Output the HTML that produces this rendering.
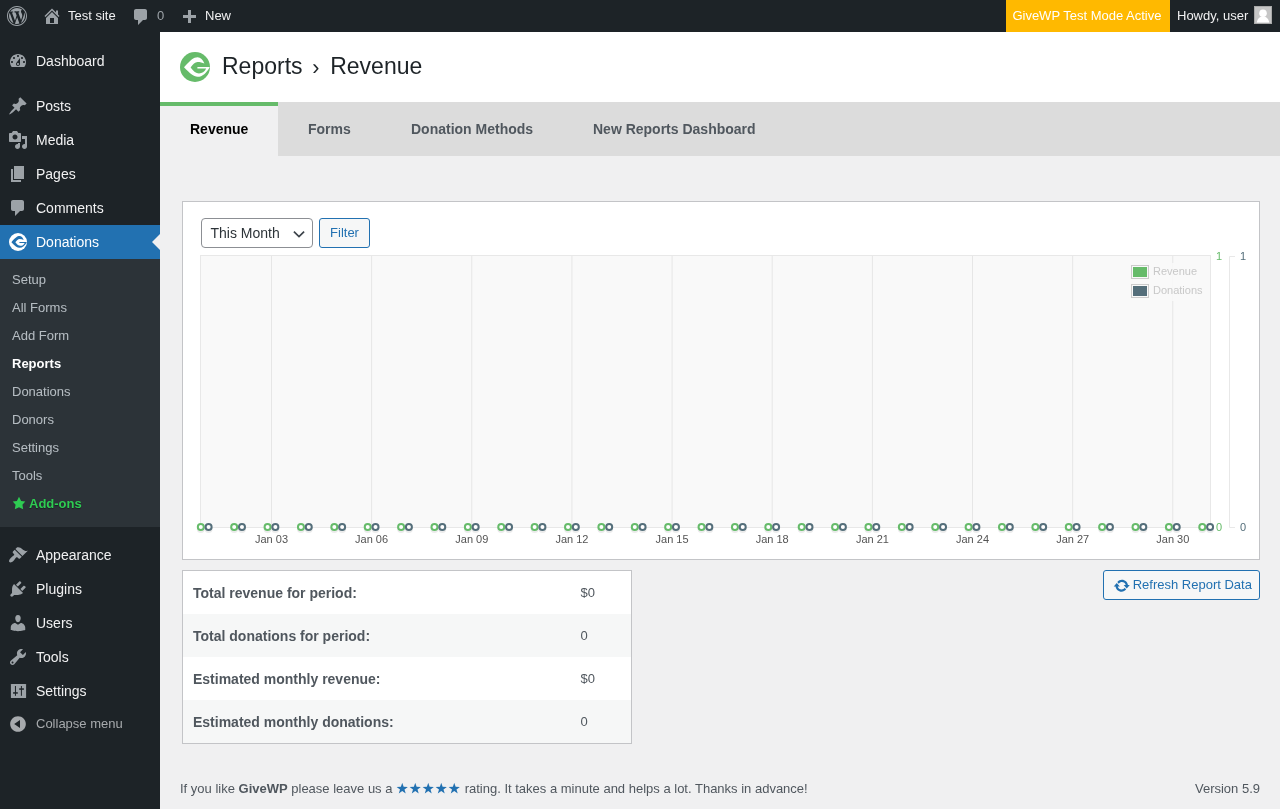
<!DOCTYPE html>
<html><head><meta charset="utf-8">
<style>
*{box-sizing:border-box;margin:0;padding:0}
html,body{width:1280px;height:809px;overflow:hidden}
body{background:#f0f0f1;font-family:"Liberation Sans",sans-serif;color:#3c434a;font-size:13px;line-height:1.4;position:relative}
.abs{position:absolute}
#adminbar{position:absolute;left:0;top:0;width:1280px;height:32px;background:#1d2327;color:#f0f0f1;font-size:13px;line-height:32px}
#adminbar .t{position:absolute;top:0;white-space:nowrap}
#menu{position:absolute;left:0;top:32px;width:160px;height:777px;background:#1d2327}
.mi{position:absolute;left:0;width:160px;height:34px;color:#f0f0f1;font-size:14px;line-height:34px}
.mi span{position:absolute;left:36px;top:0}
.mi svg{position:absolute;left:8px;top:7px;width:20px;height:20px}
#sub{position:absolute;left:0;top:227px;width:160px;height:268px;background:#2c3338}
.si{position:absolute;left:12px;color:rgba(240,246,252,.7);font-size:13px;line-height:18px;white-space:nowrap}
#givehead{position:absolute;left:160px;top:32px;width:1120px;height:70px;background:#fff}
#tabs{position:absolute;left:160px;top:102px;width:1120px;height:54px;background:#dcdcdc}
.tab{position:absolute;top:0;height:54px;line-height:54px;font-size:14px;font-weight:bold;color:#50575e;white-space:nowrap}
#chartbox{position:absolute;left:182px;top:201px;width:1078px;height:359px;background:#fff;border:1px solid #c3c4c7}
.sel{border:1px solid #8c8f94;border-radius:4px;background:#fff;color:#2c3338;font-size:14px;line-height:28px;padding-left:8.5px;white-space:nowrap}
.btn{border:1px solid #2271b1;border-radius:3px;background:#f6f7f7;color:#2271b1;font-size:13px;line-height:28px;text-align:center;white-space:nowrap}
.dg{stroke:#66bb6a;fill:#fff}.dd{stroke:#546e7a;fill:#fff}.sh{stroke:rgba(0,0,0,.08)}
.xl{position:absolute;top:332px;width:50px;text-align:center;font-size:11px;line-height:13px;color:#545454;white-space:nowrap}
.yl{position:absolute;font-size:11px;line-height:13px;white-space:nowrap}
.leg{position:absolute;font-size:11px;line-height:14px;color:#c8c8c8;white-space:nowrap}
#stats{position:absolute;left:182px;top:570px;width:450px;height:174px;border:1px solid #c3c4c7;background:#fff}
.row{position:absolute;left:0;width:448px;height:43px;font-size:14px;line-height:43px;color:#50575e}
.row b{position:absolute;left:10px;top:1px;white-space:nowrap}
.row span{position:absolute;left:397.5px;top:-0.5px;font-size:13px}
.foot{font-size:13px;line-height:20px;color:#50575e;white-space:nowrap}
.h1{top:16px;font-size:23px;line-height:36px;color:#1d2327;white-space:nowrap}
</style></head><body><div id="root" style="position:absolute;left:0;top:0;width:1280px;height:809px;will-change:transform">

<div id="adminbar">
  <svg class="abs" style="left:7px;top:6px" width="20" height="20" viewBox="0 0 20 20"><path fill="#9ca2a7" d="M20 10c0-5.52-4.48-10-10-10S0 4.48 0 10s4.48 10 10 10 10-4.48 10-10zM10 1.01c4.97 0 8.99 4.02 8.99 8.99s-4.02 8.99-8.99 8.99S1.01 14.97 1.01 10 5.03 1.01 10 1.01zM8.01 14.82L4.96 6.61c.49-.03 1.05-.08 1.05-.08.43-.05.38-1.01-.06-.99 0 0-1.29.1-2.13.1-.15 0-.33 0-.52-.01 1.44-2.17 3.9-3.6 6.7-3.6 2.09 0 3.99.79 5.41 2.09-.6-.08-1.45.35-1.45 1.42 0 .66.38 1.22.79 1.88.31.54.5 1.22.5 2.21 0 1.34-1.27 4.48-1.27 4.48l-2.71-7.5c.48-.03.75-.16.75-.16.43-.05.38-1.1-.05-1.08 0 0-1.3.11-2.14.11-.78 0-2.11-.11-2.11-.11-.43-.02-.48 1.06-.05 1.08l.84.08 1.12 3.04zm6.02 2.15L16.64 10s.67-1.69.39-3.81c.63 1.14.94 2.42.94 3.81 0 2.96-1.56 5.58-3.94 6.97zM2.68 6.77L6.5 17.25c-2.67-1.3-4.47-4.08-4.47-7.25 0-1.16.2-2.23.65-3.23zm7.45 4.53l2.29 6.25c-.75.27-1.57.42-2.42.42-.72 0-1.41-.11-2.06-.3z"/></svg>
  <svg class="abs" style="left:42px;top:6px" width="20" height="20" viewBox="0 0 20 20"><path fill="#9ca2a7" d="M16 8.5l1.53 1.53-1.06 1.06L10 4.62l-6.47 6.47-1.06-1.06L10 2.5l4 4v-2h2v4zm-6-2.46l6 5.99V18H4v-5.97zM12 17v-5H8v5h4z"/></svg>
  <div class="t" style="left:68px">Test site</div>
  <svg class="abs" style="left:131px;top:7px" width="20" height="20" viewBox="0 0 20 20"><path fill="#9ca2a7" d="M5 2h9c1.1 0 2 .9 2 2v7c0 1.1-.9 2-2 2h-2l-5 5v-5H5c-1.1 0-2-.9-2-2V4c0-1.1.9-2 2-2z"/></svg>
  <div class="t" style="left:157px;color:#9ca2a7">0</div>
  <svg class="abs" style="left:179px;top:8px" width="20" height="20" viewBox="0 0 20 20"><path fill="#9ca2a7" d="M17 7v3h-5v5H9v-5H4V7h5V2h3v5h5z"/></svg>
  <div class="t" style="left:205px">New</div>
  <div class="abs" style="left:1006px;top:0;width:164px;height:32px;background:#ffb900"></div>
  <div class="t" style="left:1012.4px;color:#fff">GiveWP Test Mode Active</div>
  <div class="t" style="left:1177px">Howdy, user</div>
  <div class="abs" style="left:1254px;top:6px;width:18px;height:18px;background:#c6c6c6;border:1px solid #a9a9a9;overflow:hidden"><svg width="16" height="16" viewBox="0 0 16 16" style="display:block"><circle cx="8" cy="6.3" r="3.8" fill="#fff"/><path d="M1.8 15.6C2.5 11.5 5 9.6 8 9.6S13.5 11.5 14.2 15.6z" fill="#fff"/></svg></div>
</div>

<div id="menu">
<div class="mi" style="top:12px"><svg viewBox="0 0 20 20"><path fill="#9ca2a7" fill-rule="evenodd" d="M3.76 16h12.48c1.1-1.37 1.76-3.11 1.76-5 0-4.42-3.58-8-8-8s-8 3.58-8 8c0 1.89.66 3.630 1.76 5zM10 4c.55 0 1 .45 1 1s-.45 1-1 1-1-.45-1-1 .45-1 1-1zM6 6c.55 0 1 .45 1 1s-.45 1-1 1-1-.45-1-1 .45-1 1-1zm8 0c.55 0 1 .45 1 1s-.45 1-1 1-1-.45-1-1 .45-1 1-1zm-5.37 5.55L12 7v6c0 1.1-.9 2-2 2s-2-.9-2-2c0-.57.24-1.08.63-1.450zM4 10c.55 0 1 .45 1 1s-.45 1-1 1-1-.45-1-1 .45-1 1-1zm12 0c.55 0 1 .45 1 1s-.45 1-1 1-1-.45-1-1 .45-1 1-1zm-5 3c0-.55-.45-1-1-1s-1 .45-1 1 .45 1 1 1 1-.45 1-1z"/></svg><span>Dashboard</span></div>
<div class="mi" style="top:57px"><svg viewBox="0 0 20 20"><path fill="#9ca2a7" fill-rule="evenodd" d="M10.44 3.02l1.82-1.82 6.36 6.35-1.83 1.82c-1.05-.68-2.48-.57-3.41.36l-.75.75c-.92.93-1.04 2.35-.35 3.41l-1.830 1.82-2.410-2.41-2.8 2.79c-.42.42-3.38 2.71-3.8 2.29s1.86-3.39 2.28-3.810l2.79-2.79L4.1 9.36l1.83-1.82c1.05.69 2.48.57 3.4-.36l.75-.75c.93-.92 1.05-2.35.36-3.41z"/></svg><span>Posts</span></div>
<div class="mi" style="top:91px"><svg viewBox="0 0 20 20"><path fill="#9ca2a7" fill-rule="evenodd" d="M13 11V4c0-.55-.45-1-1-1h-1.67L9 1H5L3.67 3H2c-.55 0-1 .45-1 1v7c0 .55.45 1 1 1h10c.55 0 1-.45 1-1zM7 4.5c1.38 0 2.5 1.12 2.5 2.5S8.38 9.5 7 9.5 4.5 8.38 4.5 7 5.62 4.5 7 4.5zM14 6h5v10.5c0 1.38-1.12 2.5-2.5 2.5S14 17.88 14 16.5s1.12-2.5 2.5-2.5c.17 0 .34.02.5.05V9h-3V6zm-4 8.05V13h2v3.5c0 1.38-1.12 2.5-2.5 2.5S7 17.880 7 16.5 8.12 14 9.5 14c.17 0 .34.02.5.05z"/></svg><span>Media</span></div>
<div class="mi" style="top:125px"><svg viewBox="0 0 20 20"><path fill="#9ca2a7" fill-rule="evenodd" d="M6 15V2h10v13H6zm-1 1h8v2H3V5h2v11z"/></svg><span>Pages</span></div>
<div class="mi" style="top:159px"><svg viewBox="0 0 20 20"><path fill="#9ca2a7" fill-rule="evenodd" d="M5 2h9c1.1 0 2 .9 2 2v7c0 1.1-.9 2-2 2h-2l-5 5v-5H5c-1.1 0-2-.9-2-2V4c0-1.1.9-2 2-2z"/></svg><span>Comments</span></div>
<div class="mi" style="top:193px;background:#2271b1;color:#fff"><svg viewBox="0 0 30 30" style="left:9px;top:8px;width:18px;height:18px"><circle cx="15" cy="15" r="15" fill="#fff"/><path fill="#2271b1" d="M24.4 11.6C23 7.5 20.5 5.2 17.6 5.2C13.5 5.2 10.5 8 4 15.3C10 21.5 13.5 24.7 17.6 24.7C22.5 24.7 26.5 21 29.8 14.9L17.4 15.1L17.4 16.5L26.2 16.5C24.5 19.8 22 21.4 19 21.4C16 21.4 13.5 19.5 10.6 15.5C13 12.5 15 10.1 17.5 10.1C20 10.1 22.5 10.8 24.4 11.6Z"/></svg><span>Donations</span><div class="abs" style="left:152px;top:9px;width:0;height:0;border-top:8px solid transparent;border-bottom:8px solid transparent;border-right:8px solid #f0f0f1"></div></div>
<div class="mi" style="top:506px"><svg viewBox="0 0 20 20"><path fill="#9ca2a7" fill-rule="evenodd" d="M14.48 11.06L7.41 3.99l1.5-1.5c.5-.56 2.3-.47 3.51.32 1.21.8 1.43 1.28 2.91 2.1 1.18.64 2.45 1.26 4.45.85zm-.71.71L6.7 4.7 4.93 6.47c-.39.39-.39 1.02 0 1.41l1.06 1.06c.39.39.39 1.030 0 1.42-.6.6-1.43 1.11-2.21 1.69-.35.26-.7.53-1.01.84C1.43 14.23.4 16.08 1.4 17.07c.99 1 2.84-.03 4.18-1.36.31-.31.58-.66.85-1.02.57-.78 1.08-1.61 1.69-2.21.39-.39 1.02-.39 1.41 0l1.06 1.06c.39.39 1.02.39 1.41 0z"/></svg><span>Appearance</span></div>
<div class="mi" style="top:540px"><svg viewBox="0 0 20 20"><path fill="#9ca2a7" fill-rule="evenodd" d="M13.11 4.36L9.87 7.6 8 5.73l3.24-3.24c.35-.34 1.05-.2 1.56.32.52.51.66 1.21.31 1.55zm-8 1.77l.91-1.12 9.01 9.01-1.19.84c-.71.71-2.63 1.16-3.820 1.16H6.14L4.9 17.26c-.59.59-1.54.59-2.12 0-.59-.58-.59-1.53 0-2.12l1.24-1.24v-3.88c0-1.13.4-3.19 1.09-3.890zm7.26 3.97l3.24-3.24c.34-.35 1.04-.21 1.55.31.52.51.66 1.21.31 1.55l-3.24 3.25z"/></svg><span>Plugins</span></div>
<div class="mi" style="top:574px"><svg viewBox="0 0 20 20"><path fill="#9ca2a7" fill-rule="evenodd" d="M10 9.25c-2.27 0-2.73-3.44-2.73-3.44C7 4.02 7.82 2 9.97 2c2.16 0 2.98 2.02 2.71 3.81 0 0-.41 3.44-2.68 3.44zm0 2.57L12.72 10c2.39 0 4.52 2.33 4.52 4.53v2.49s-3.65 1.13-7.24 1.13c-3.65 0-7.24-1.13-7.24-1.13v-2.49c0-2.25 1.94-4.48 4.47-4.480z"/></svg><span>Users</span></div>
<div class="mi" style="top:608px"><svg viewBox="0 0 20 20"><path fill="#9ca2a7" fill-rule="evenodd" d="M16.68 9.77c-1.34 1.34-3.3 1.67-4.95.99l-5.41 6.52c-.99.99-2.59.99-3.58 0s-.99-2.59 0-3.57l6.52-5.42c-.68-1.650-.35-3.610.99-4.950 1.28-1.28 3.12-1.62 4.72-1.06l-2.89 2.89 2.82 2.82 2.86-2.87c.53 1.580.18 3.39-1.08 4.650zM3.81 16.21c.4.39 1.04.39 1.43 0 .4-.4.4-1.04 0-1.43-.39-.4-1.03-.4-1.43 0-.39.39-.39 1.03 0 1.43z"/></svg><span>Tools</span></div>
<div class="mi" style="top:642px"><svg viewBox="0 0 20 20"><rect x="2.9" y="2.9" width="15.2" height="14.2" rx="0.6" fill="#9ca2a7"/><g fill="#1d2327"><rect x="6.95" y="5" width="1" height="9.8"/><rect x="5.1" y="11.2" width="4.7" height="1.5"/><rect x="12.9" y="5" width="1" height="9.8"/><rect x="11.2" y="7.3" width="4.7" height="1.5"/></g></svg><span>Settings</span></div>
<div class="mi" style="top:675px;font-size:13px;color:#a7aaad"><svg viewBox="0 0 20 20" style="top:7px"><path fill="#a7aaad" d="M10 2.16c4.33 0 7.84 3.51 7.84 7.84s-3.51 7.84-7.84 7.84S2.16 14.33 2.16 10 5.71 2.16 10 2.16zm2 11.72V6.12L6.18 9.97z"/></svg><span>Collapse menu</span></div>
<div id="sub">
<div class="si" style="top:12px;">Setup</div>
<div class="si" style="top:40px;">All Forms</div>
<div class="si" style="top:68px;">Add Form</div>
<div class="si" style="top:96px;color:#fff;font-weight:600;font-weight:bold">Reports</div>
<div class="si" style="top:124px;">Donations</div>
<div class="si" style="top:152px;">Donors</div>
<div class="si" style="top:180px;">Settings</div>
<div class="si" style="top:208px;">Tools</div>
<div class="si" style="top:236px;color:#2ecc52;font-weight:bold;text-shadow:0 1px 1px rgba(0,0,0,.4)"><svg width="14" height="14" viewBox="0 0 20 20" style="vertical-align:-2px;margin-right:3px"><path fill="#2ecc52" d="M10 1l3 6 6 .75-4.12 4.62L16 19l-6-3-6 3 1.13-6.63L1 7.75 7 7z"/></svg>Add-ons</div>
</div>
</div>

<div id="givehead">
  <svg class="abs" style="left:20px;top:20px" width="30" height="30" viewBox="0 0 30 30"><circle cx="15" cy="15" r="15" fill="#66bb6a"/><path fill="#fff" d="M24.4 11.6C23 7.5 20.5 5.2 17.6 5.2C13.5 5.2 10.5 8 4 15.3C10 21.5 13.5 24.7 17.6 24.7C22.5 24.7 26.5 21 29.8 14.9L17.4 15.1L17.4 16.5L26.2 16.5C24.5 19.8 22 21.4 19 21.4C16 21.4 13.5 19.5 10.6 15.5C13 12.5 15 10.1 17.5 10.1C20 10.1 22.5 10.8 24.4 11.6Z"/></svg>
  <div class="abs h1" style="left:62px">Reports</div><div class="abs h1" style="left:152.3px;top:17.6px;font-size:21.5px">&rsaquo;</div><div class="abs h1" style="left:170.2px">Revenue</div>
</div>
<div id="tabs">
  <div class="abs" style="left:0;top:0;width:118px;height:54px;background:#f0f0f1;border-top:4px solid #66bb6a"></div>
  <div class="tab" style="left:30px;color:#000;top:0">Revenue</div>
  <div class="tab" style="left:148px">Forms</div>
  <div class="tab" style="left:251px">Donation Methods</div>
  <div class="tab" style="left:433px">New Reports Dashboard</div>
</div>
<div id="chartbox"><div class="abs" style="left:-1px;top:-1px;width:1078px;height:358px">
  <div class="abs sel" style="left:19px;top:17px;width:112px;height:30px">This Month<svg class="abs" style="right:7px;top:9px" width="12" height="12" viewBox="0 0 12 12"><path d="M0.9 3.6L6 8.5l5.1-4.9" fill="none" stroke="#3c434a" stroke-width="1.7"/></svg></div>
  <div class="abs btn" style="left:137px;top:17px;width:51px;height:30px">Filter</div>
  <svg class="abs" style="left:0;top:0" width="1076" height="356">
    <rect x="18" y="54" width="1011" height="272" fill="#f9f9f9"/>
    <line x1="89.5" y1="54" x2="89.5" y2="326" stroke="#e6e6e6" stroke-width="1"/><line x1="189.6" y1="54" x2="189.6" y2="326" stroke="#e6e6e6" stroke-width="1"/><line x1="289.8" y1="54" x2="289.8" y2="326" stroke="#e6e6e6" stroke-width="1"/><line x1="389.9" y1="54" x2="389.9" y2="326" stroke="#e6e6e6" stroke-width="1"/><line x1="490.1" y1="54" x2="490.1" y2="326" stroke="#e6e6e6" stroke-width="1"/><line x1="590.2" y1="54" x2="590.2" y2="326" stroke="#e6e6e6" stroke-width="1"/><line x1="690.4" y1="54" x2="690.4" y2="326" stroke="#e6e6e6" stroke-width="1"/><line x1="790.5" y1="54" x2="790.5" y2="326" stroke="#e6e6e6" stroke-width="1"/><line x1="890.7" y1="54" x2="890.7" y2="326" stroke="#e6e6e6" stroke-width="1"/><line x1="990.8" y1="54" x2="990.8" y2="326" stroke="#e6e6e6" stroke-width="1"/>
    <rect x="18.5" y="54.5" width="1010" height="272" fill="none" stroke="#e8e8e8" stroke-width="1"/>
    <path d="M1053 55.5h-5.5v271h5.5" fill="none" stroke="#e8e8e8" stroke-width="1"/>
    <g fill="none" stroke-width="2"><circle cx="18.80" cy="328.0" r="3" class="sh"/><circle cx="26.60" cy="328.0" r="3" class="sh"/><circle cx="52.18" cy="328.0" r="3" class="sh"/><circle cx="59.98" cy="328.0" r="3" class="sh"/><circle cx="85.57" cy="328.0" r="3" class="sh"/><circle cx="93.37" cy="328.0" r="3" class="sh"/><circle cx="118.95" cy="328.0" r="3" class="sh"/><circle cx="126.75" cy="328.0" r="3" class="sh"/><circle cx="152.33" cy="328.0" r="3" class="sh"/><circle cx="160.13" cy="328.0" r="3" class="sh"/><circle cx="185.72" cy="328.0" r="3" class="sh"/><circle cx="193.52" cy="328.0" r="3" class="sh"/><circle cx="219.10" cy="328.0" r="3" class="sh"/><circle cx="226.90" cy="328.0" r="3" class="sh"/><circle cx="252.48" cy="328.0" r="3" class="sh"/><circle cx="260.28" cy="328.0" r="3" class="sh"/><circle cx="285.86" cy="328.0" r="3" class="sh"/><circle cx="293.66" cy="328.0" r="3" class="sh"/><circle cx="319.25" cy="328.0" r="3" class="sh"/><circle cx="327.05" cy="328.0" r="3" class="sh"/><circle cx="352.63" cy="328.0" r="3" class="sh"/><circle cx="360.43" cy="328.0" r="3" class="sh"/><circle cx="386.01" cy="328.0" r="3" class="sh"/><circle cx="393.81" cy="328.0" r="3" class="sh"/><circle cx="419.40" cy="328.0" r="3" class="sh"/><circle cx="427.20" cy="328.0" r="3" class="sh"/><circle cx="452.78" cy="328.0" r="3" class="sh"/><circle cx="460.58" cy="328.0" r="3" class="sh"/><circle cx="486.16" cy="328.0" r="3" class="sh"/><circle cx="493.96" cy="328.0" r="3" class="sh"/><circle cx="519.55" cy="328.0" r="3" class="sh"/><circle cx="527.35" cy="328.0" r="3" class="sh"/><circle cx="552.93" cy="328.0" r="3" class="sh"/><circle cx="560.73" cy="328.0" r="3" class="sh"/><circle cx="586.31" cy="328.0" r="3" class="sh"/><circle cx="594.11" cy="328.0" r="3" class="sh"/><circle cx="619.69" cy="328.0" r="3" class="sh"/><circle cx="627.49" cy="328.0" r="3" class="sh"/><circle cx="653.08" cy="328.0" r="3" class="sh"/><circle cx="660.88" cy="328.0" r="3" class="sh"/><circle cx="686.46" cy="328.0" r="3" class="sh"/><circle cx="694.26" cy="328.0" r="3" class="sh"/><circle cx="719.84" cy="328.0" r="3" class="sh"/><circle cx="727.64" cy="328.0" r="3" class="sh"/><circle cx="753.23" cy="328.0" r="3" class="sh"/><circle cx="761.03" cy="328.0" r="3" class="sh"/><circle cx="786.61" cy="328.0" r="3" class="sh"/><circle cx="794.41" cy="328.0" r="3" class="sh"/><circle cx="819.99" cy="328.0" r="3" class="sh"/><circle cx="827.79" cy="328.0" r="3" class="sh"/><circle cx="853.38" cy="328.0" r="3" class="sh"/><circle cx="861.17" cy="328.0" r="3" class="sh"/><circle cx="886.76" cy="328.0" r="3" class="sh"/><circle cx="894.56" cy="328.0" r="3" class="sh"/><circle cx="920.14" cy="328.0" r="3" class="sh"/><circle cx="927.94" cy="328.0" r="3" class="sh"/><circle cx="953.52" cy="328.0" r="3" class="sh"/><circle cx="961.32" cy="328.0" r="3" class="sh"/><circle cx="986.91" cy="328.0" r="3" class="sh"/><circle cx="994.71" cy="328.0" r="3" class="sh"/><circle cx="1020.29" cy="328.0" r="3" class="sh"/><circle cx="1028.09" cy="328.0" r="3" class="sh"/></g>
    <g fill="none" stroke-width="2"><circle cx="18.80" cy="326.0" r="3" class="dg"/><circle cx="26.60" cy="326.0" r="3" class="dd"/><circle cx="52.18" cy="326.0" r="3" class="dg"/><circle cx="59.98" cy="326.0" r="3" class="dd"/><circle cx="85.57" cy="326.0" r="3" class="dg"/><circle cx="93.37" cy="326.0" r="3" class="dd"/><circle cx="118.95" cy="326.0" r="3" class="dg"/><circle cx="126.75" cy="326.0" r="3" class="dd"/><circle cx="152.33" cy="326.0" r="3" class="dg"/><circle cx="160.13" cy="326.0" r="3" class="dd"/><circle cx="185.72" cy="326.0" r="3" class="dg"/><circle cx="193.52" cy="326.0" r="3" class="dd"/><circle cx="219.10" cy="326.0" r="3" class="dg"/><circle cx="226.90" cy="326.0" r="3" class="dd"/><circle cx="252.48" cy="326.0" r="3" class="dg"/><circle cx="260.28" cy="326.0" r="3" class="dd"/><circle cx="285.86" cy="326.0" r="3" class="dg"/><circle cx="293.66" cy="326.0" r="3" class="dd"/><circle cx="319.25" cy="326.0" r="3" class="dg"/><circle cx="327.05" cy="326.0" r="3" class="dd"/><circle cx="352.63" cy="326.0" r="3" class="dg"/><circle cx="360.43" cy="326.0" r="3" class="dd"/><circle cx="386.01" cy="326.0" r="3" class="dg"/><circle cx="393.81" cy="326.0" r="3" class="dd"/><circle cx="419.40" cy="326.0" r="3" class="dg"/><circle cx="427.20" cy="326.0" r="3" class="dd"/><circle cx="452.78" cy="326.0" r="3" class="dg"/><circle cx="460.58" cy="326.0" r="3" class="dd"/><circle cx="486.16" cy="326.0" r="3" class="dg"/><circle cx="493.96" cy="326.0" r="3" class="dd"/><circle cx="519.55" cy="326.0" r="3" class="dg"/><circle cx="527.35" cy="326.0" r="3" class="dd"/><circle cx="552.93" cy="326.0" r="3" class="dg"/><circle cx="560.73" cy="326.0" r="3" class="dd"/><circle cx="586.31" cy="326.0" r="3" class="dg"/><circle cx="594.11" cy="326.0" r="3" class="dd"/><circle cx="619.69" cy="326.0" r="3" class="dg"/><circle cx="627.49" cy="326.0" r="3" class="dd"/><circle cx="653.08" cy="326.0" r="3" class="dg"/><circle cx="660.88" cy="326.0" r="3" class="dd"/><circle cx="686.46" cy="326.0" r="3" class="dg"/><circle cx="694.26" cy="326.0" r="3" class="dd"/><circle cx="719.84" cy="326.0" r="3" class="dg"/><circle cx="727.64" cy="326.0" r="3" class="dd"/><circle cx="753.23" cy="326.0" r="3" class="dg"/><circle cx="761.03" cy="326.0" r="3" class="dd"/><circle cx="786.61" cy="326.0" r="3" class="dg"/><circle cx="794.41" cy="326.0" r="3" class="dd"/><circle cx="819.99" cy="326.0" r="3" class="dg"/><circle cx="827.79" cy="326.0" r="3" class="dd"/><circle cx="853.38" cy="326.0" r="3" class="dg"/><circle cx="861.17" cy="326.0" r="3" class="dd"/><circle cx="886.76" cy="326.0" r="3" class="dg"/><circle cx="894.56" cy="326.0" r="3" class="dd"/><circle cx="920.14" cy="326.0" r="3" class="dg"/><circle cx="927.94" cy="326.0" r="3" class="dd"/><circle cx="953.52" cy="326.0" r="3" class="dg"/><circle cx="961.32" cy="326.0" r="3" class="dd"/><circle cx="986.91" cy="326.0" r="3" class="dg"/><circle cx="994.71" cy="326.0" r="3" class="dd"/><circle cx="1020.29" cy="326.0" r="3" class="dg"/><circle cx="1028.09" cy="326.0" r="3" class="dd"/></g>
  </svg>
  <div class="xl" style="left:64.5px">Jan 03</div><div class="xl" style="left:164.6px">Jan 06</div><div class="xl" style="left:264.8px">Jan 09</div><div class="xl" style="left:364.9px">Jan 12</div><div class="xl" style="left:465.1px">Jan 15</div><div class="xl" style="left:565.2px">Jan 18</div><div class="xl" style="left:665.4px">Jan 21</div><div class="xl" style="left:765.5px">Jan 24</div><div class="xl" style="left:865.7px">Jan 27</div><div class="xl" style="left:965.8px">Jan 30</div>
  <div class="yl" style="left:1034px;top:49px;color:#66bb6a">1</div>
  <div class="yl" style="left:1034px;top:320px;color:#66bb6a">0</div>
  <div class="yl" style="left:1058px;top:49px;color:#546e7a">1</div>
  <div class="yl" style="left:1058px;top:320px;color:#546e7a">0</div>
  <div class="abs" style="left:947px;top:62px;width:78px;height:38px;background:rgba(249,249,249,.85)"></div><div class="abs" style="left:949px;top:64px;width:18px;height:14px;border:1px solid #ccc;padding:1px"><div style="width:14px;height:10px;background:#66bb6a"></div></div>
  <div class="abs" style="left:949px;top:83px;width:18px;height:14px;border:1px solid #ccc;padding:1px"><div style="width:14px;height:10px;background:#546e7a"></div></div>
  <div class="leg" style="left:971px;top:63px">Revenue</div>
  <div class="leg" style="left:971px;top:82px">Donations</div>
</div></div>
<div id="stats">
  <div class="row" style="top:0;background:#fff"><b>Total revenue for period:</b><span>$0</span></div>
  <div class="row" style="top:43px;background:#f6f7f7"><b>Total donations for period:</b><span>0</span></div>
  <div class="row" style="top:86px;background:#fff"><b>Estimated monthly revenue:</b><span>$0</span></div>
  <div class="row" style="top:129px;background:#f6f7f7"><b>Estimated monthly donations:</b><span>0</span></div>
</div>
<div class="abs btn" style="left:1103px;top:570px;width:157px;height:30px;text-align:left;padding-left:28.7px">Refresh Report Data<svg class="abs" style="left:9.1px;top:6.2px" width="17.5" height="17.5" viewBox="0 0 20 20"><path fill="#2271b1" d="M10.2 3.28c3.53 0 6.43 2.61 6.92 6h2.08l-3.5 4-3.5-4h2.32c-.45-1.970-2.210-3.450-4.320-3.450-1.450 0-2.730.710-3.540 1.780L4.950 5.660C6.230 4.200 8.110 3.280 10.200 3.280zm-.4 13.44c-3.52 0-6.43-2.610-6.920-6H.8l3.5-4c1.170 1.330 2.330 2.670 3.500 4H5.480c.450 1.970 2.210 3.450 4.320 3.450 1.450 0 2.730-.710 3.540-1.780l1.710 1.950c-1.280 1.460-3.150 2.380-5.250 2.380z"/></svg></div>
<div class="abs foot" style="left:180px;top:779px">If you like <b>GiveWP</b> please leave us a <svg width="13" height="12" viewBox="0 0 13 12" style="vertical-align:-2px"><polygon fill="#2271b1" points="6.25,-0.15 7.64,3.84 11.86,3.93 8.49,6.48 9.72,10.52 6.25,8.11 2.78,10.52 4.01,6.48 0.64,3.93 4.86,3.84"/></svg><svg width="13" height="12" viewBox="0 0 13 12" style="vertical-align:-2px"><polygon fill="#2271b1" points="6.25,-0.15 7.64,3.84 11.86,3.93 8.49,6.48 9.72,10.52 6.25,8.11 2.78,10.52 4.01,6.48 0.64,3.93 4.86,3.84"/></svg><svg width="13" height="12" viewBox="0 0 13 12" style="vertical-align:-2px"><polygon fill="#2271b1" points="6.25,-0.15 7.64,3.84 11.86,3.93 8.49,6.48 9.72,10.52 6.25,8.11 2.78,10.52 4.01,6.48 0.64,3.93 4.86,3.84"/></svg><svg width="13" height="12" viewBox="0 0 13 12" style="vertical-align:-2px"><polygon fill="#2271b1" points="6.25,-0.15 7.64,3.84 11.86,3.93 8.49,6.48 9.72,10.52 6.25,8.11 2.78,10.52 4.01,6.48 0.64,3.93 4.86,3.84"/></svg><svg width="13" height="12" viewBox="0 0 13 12" style="vertical-align:-2px"><polygon fill="#2271b1" points="6.25,-0.15 7.64,3.84 11.86,3.93 8.49,6.48 9.72,10.52 6.25,8.11 2.78,10.52 4.01,6.48 0.64,3.93 4.86,3.84"/></svg> rating. It takes a minute and helps a lot. Thanks in advance!</div>
<div class="abs foot" style="right:20px;top:779px">Version 5.9</div>


</div></body></html>
